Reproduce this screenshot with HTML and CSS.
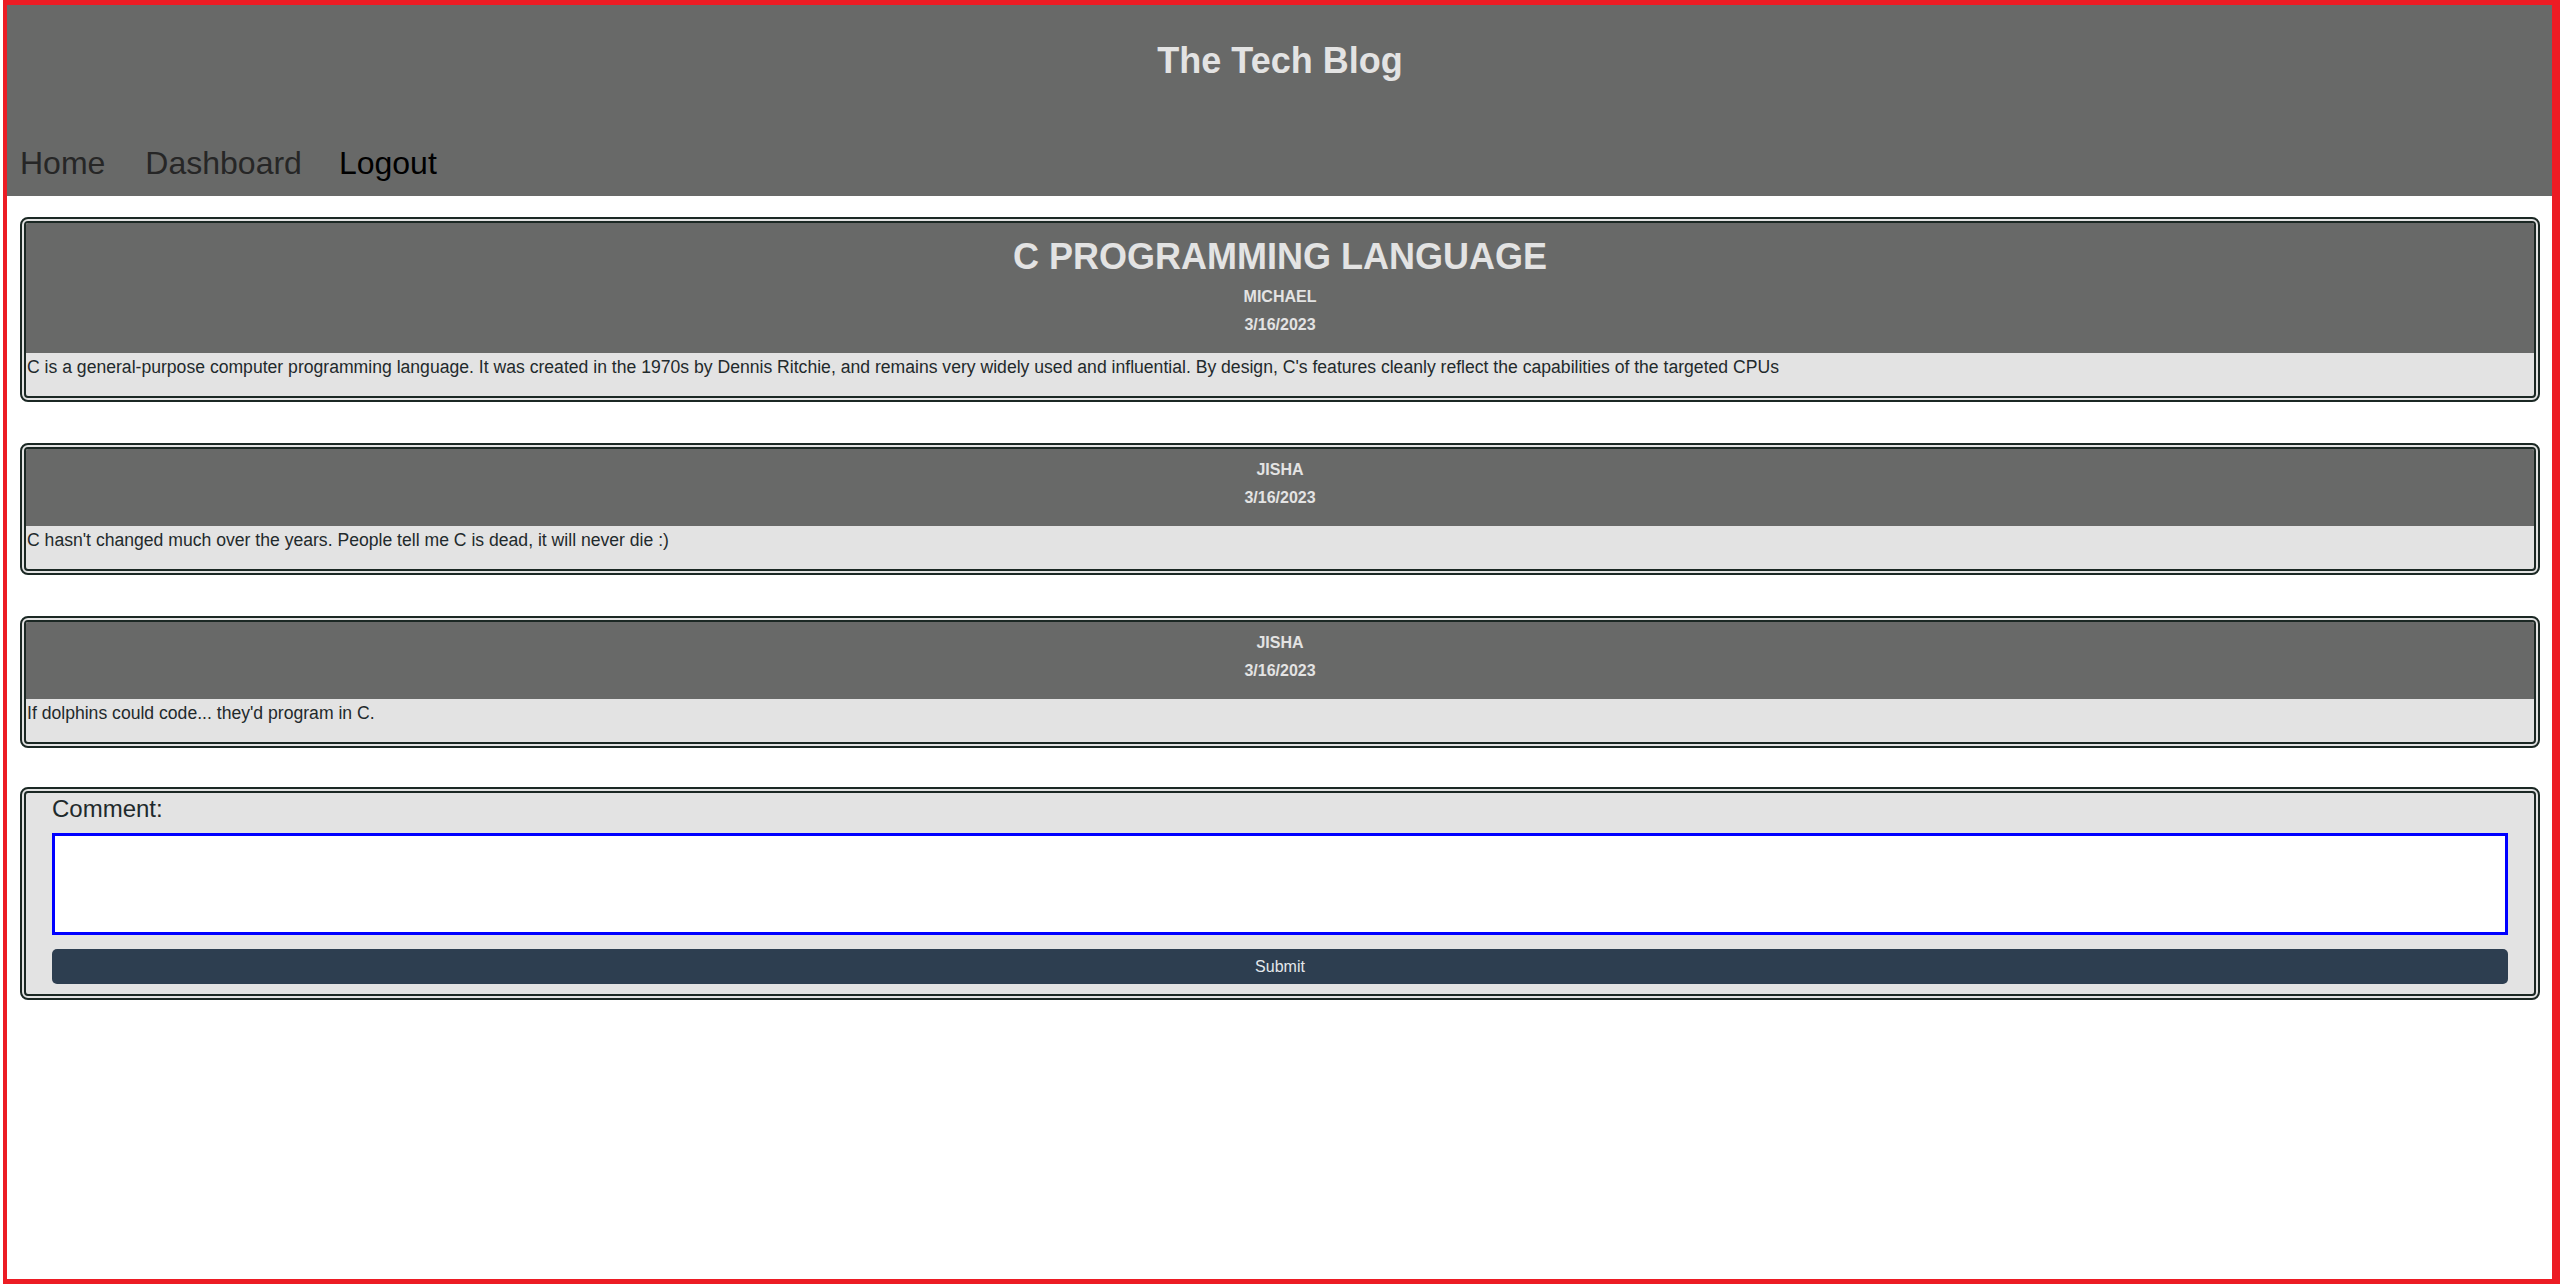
FILE: index.html
```html
<!DOCTYPE html>
<html lang="en">
<head>
<meta charset="utf-8">
<title>The Tech Blog</title>
<link rel="stylesheet" href="styles.css">
</head>
<body>
  <header class="site-header">
    <h1 class="site-title">The Tech Blog</h1>
    <nav class="site-nav">
      <a class="nav-link" href="#">Home</a>
      <a class="nav-link" href="#">Dashboard</a>
      <a class="nav-link nav-link-active" href="#">Logout</a>
    </nav>
  </header>

  <main class="content">
    <article class="card">
      <div class="card-head">
        <h2 class="post-title">C PROGRAMMING LANGUAGE</h2>
        <p class="meta">MICHAEL</p>
        <p class="meta">3/16/2023</p>
      </div>
      <p class="card-body">C is a general-purpose computer programming language. It was created in the 1970s by Dennis Ritchie, and remains very widely used and influential. By design, C's features cleanly reflect the capabilities of the targeted CPUs</p>
    </article>

    <article class="card">
      <div class="card-head">
        <p class="meta">JISHA</p>
        <p class="meta">3/16/2023</p>
      </div>
      <p class="card-body">C hasn't changed much over the years. People tell me C is dead, it will never die :)</p>
    </article>

    <article class="card">
      <div class="card-head">
        <p class="meta">JISHA</p>
        <p class="meta">3/16/2023</p>
      </div>
      <p class="card-body">If dolphins could code... they'd program in C.</p>
    </article>

    <form class="card comment-form">
      <label class="comment-label" for="comment">Comment:</label>
      <textarea class="comment-input" id="comment"></textarea>
      <button class="submit-btn" type="button">Submit</button>
    </form>
  </main>

  <div class="frame"></div>
</body>
</html>
```
FILE: styles.css
```css
* {
  box-sizing: border-box;
}

html, body {
  margin: 0;
  padding: 0;
}

body {
  font-family: "Liberation Sans", Arial, sans-serif;
  background: #ffffff;
  min-height: 1284px;
}

.site-header {
  background: #686968;
  height: 196px;
  padding-top: 40px;
}

.site-title {
  margin: 0;
  font-size: 36px;
  line-height: 41px;
  font-weight: bold;
  text-align: center;
  color: #e3e3e3;
}

.site-nav {
  display: flex;
  margin-top: 64px;
  line-height: 37px;
}

.nav-link {
  font-size: 32px;
  color: #262626;
  text-decoration: none;
  padding: 0 20px;
}

.nav-link-active {
  color: #000000;
  padding-left: 17px;
}

.content {
  display: flex;
  flex-direction: column;
  gap: 41px;
  padding: 21px 20px 0;
}

.card {
  border: 6px double #1b2824;
  border-radius: 8px;
  background: #e3e3e3;
  overflow: hidden;
}

.card-head {
  background: #686968;
  color: #e3e3e3;
  text-align: center;
  padding: 7px 0 14px;
}

.post-title {
  margin: 0;
  font-size: 36px;
  line-height: 53px;
  font-weight: bold;
}

.meta {
  margin: 0;
  font-size: 16px;
  line-height: 28px;
  font-weight: bold;
}

.card-body {
  margin: 0;
  padding: 4px 0 18px 1px;
  font-size: 17.6px;
  line-height: 21px;
  color: #1f2a2c;
}

.comment-form {
  display: flex;
  flex-direction: column;
  padding: 2px 26px 10px;
  margin-top: -2px;
}

.comment-label {
  font-size: 24px;
  line-height: 28px;
  color: #1f2a2c;
}

.comment-input {
  display: block;
  width: 100%;
  height: 102px;
  margin-top: 10px;
  border: 3px solid #0000ff;
  background: #ffffff;
  resize: none;
  outline: none;
  font-family: inherit;
}

.submit-btn {
  display: block;
  width: 100%;
  height: 35px;
  margin-top: 14px;
  border: none;
  border-radius: 5px;
  background: #2d3e50;
  color: #e3e8ec;
  font-family: "Liberation Sans", Arial, sans-serif;
  font-size: 16px;
}

.frame {
  position: fixed;
  top: 0;
  left: 3px;
  right: 0;
  bottom: 0;
  border: 5px solid #ec1c24;
  border-left-width: 4px;
  border-right-width: 8px;
  pointer-events: none;
}

.frame::before {
  content: "";
  position: absolute;
  top: -5px;
  bottom: -5px;
  left: -7px;
  width: 3px;
  background: #ffffff;
}
```
